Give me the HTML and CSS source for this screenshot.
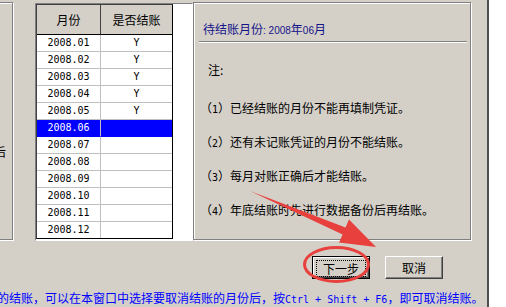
FILE: index.html
```html
<!DOCTYPE html>
<html lang="zh-CN">
<head>
  <meta charset="UTF-8" />
  <title>月末结账</title>
  <link rel="stylesheet" href="styles.css">
</head>
<body>

  <div class="dialog">
    <div class="main">
      <div class="side-panel"><span class="cut">后</span></div>

      <div class="listbox">
        <div class="grid">
          <div class="hcell sep">月份</div>
          <div class="hcell">是否结账</div>

          <div class="cell sep">2008.01</div><div class="cell">Y</div>
          <div class="cell sep">2008.02</div><div class="cell">Y</div>
          <div class="cell sep">2008.03</div><div class="cell">Y</div>
          <div class="cell sep">2008.04</div><div class="cell">Y</div>
          <div class="cell sep">2008.05</div><div class="cell">Y</div>
          <div class="cell sep selected">2008.06</div><div class="cell selected"></div>
          <div class="cell sep">2008.07</div><div class="cell"></div>
          <div class="cell sep">2008.08</div><div class="cell"></div>
          <div class="cell sep">2008.09</div><div class="cell"></div>
          <div class="cell sep">2008.10</div><div class="cell"></div>
          <div class="cell sep">2008.11</div><div class="cell"></div>
          <div class="cell sep last">2008.12</div><div class="cell last"></div>
        </div>
      </div>

      <div class="group">
        <div class="group-title">待结账月份<span class="num">: 2008</span>年<span class="num">06</span>月</div>
        <div class="rule"></div>
        <div class="note">注:</div>
        <ul class="rules">
          <li>（<span class="digit">1</span>）已经结账的月份不能再填制凭证。</li>
          <li>（<span class="digit">2</span>）还有未记账凭证的月份不能结账。</li>
          <li>（<span class="digit">3</span>）每月对账正确后才能结账。</li>
          <li>（<span class="digit">4</span>）年底结账时先进行数据备份后再结账。</li>
        </ul>
      </div>
    </div>

    <div class="buttons">
      <button class="btn default"><span class="focus">下一步</span></button>
      <button class="btn">取消</button>
    </div>

    <div class="hint">的结账，可以在本窗口中选择要取消结账的月份后，按<span class="mono">Ctrl + Shift + F6</span>，即可取消结账。</div>

    <svg class="marks" width="506" height="307" viewBox="0 0 506 307">
      <polygon fill="#e8403d" points="250,191 345.5,227.4 349,219.4 376,247 339,242.6 342.6,234.6"/>
      <ellipse cx="336.5" cy="264.5" rx="32" ry="17" fill="none" stroke="#e8403d" stroke-width="3"/>
    </svg>
  </div>

  <div class="outside"></div>

</body>
</html>
```

FILE: styles.css
```css
body {
  margin: 0;
  width: 506px;
  height: 307px;
  overflow: hidden;
  display: flex;
  background: #fff;
  font-family: "Noto Sans CJK SC", sans-serif;
  font-size: 12px;
  color: #000;
}

.dialog {
  position: relative;
  width: 487px;
  height: 307px;
  background: #d4d0c8;
  border-right: 2px solid #505050;
  overflow: hidden;
}

.outside {
  flex: 1;
  background: #fff;
}

.main {
  display: flex;
  align-items: flex-start;
  padding-top: 2px;
  height: 239px;
}

/* etched frames */
.side-panel,
.group {
  box-sizing: border-box;
  border: 1px solid #808080;
  box-shadow: 1px 1px 0 #fff, inset 1px 1px 0 #fff;
}

.side-panel {
  width: 15px;
  height: 238px;
  margin-left: -2px;
  padding-top: 141px;
  overflow: hidden;
}

.cut {
  display: block;
  margin-left: -5px;
  line-height: 16px;
  white-space: nowrap;
}

.listbox {
  box-sizing: border-box;
  width: 158px;
  height: 238px;
  margin-top: 1px;
  margin-left: 22px;
  background: #fff;
  border: 1px solid;
  border-color: #808080 #fff #fff #808080;
}

.grid {
  display: grid;
  grid-template-columns: 64px 71px;
  width: 135px;
  border: 1px solid #000;
  border-top-color: #404040;
  border-left-color: #404040;
}

.hcell {
  height: 29px;
  line-height: 29px;
  text-align: center;
  background: #d4d0c8;
  border-bottom: 1px solid #000;
}

.hcell.sep {
  border-right: 1px solid #404040;
}

.cell {
  height: 16px;
  line-height: 16px;
  text-align: center;
  border-bottom: 1px solid #c0c0c0;
  font-family: "DejaVu Sans Mono", "Liberation Mono", monospace;
  font-size: 10px;
}

.cell.sep {
  border-right: 1px solid #c0c0c0;
}

.cell.last {
  border-bottom: none;
}

.cell.selected {
  background: #0000ff;
  color: #fff;
  border-bottom-color: #0000ff;
}

.group {
  width: 278px;
  height: 238px;
}

.group-title {
  height: 16px;
  margin-top: 18px;
  padding-left: 9px;
  line-height: 16px;
  color: #14148a;
  white-space: nowrap;
}

.num {
  font-family: "Liberation Sans", sans-serif;
  font-size: 10px;
}

.rule {
  height: 1px;
  margin: 4px 3px 0 5px;
  background: #808080;
  border-bottom: 1px solid #fff;
}

.note {
  height: 16px;
  margin-top: 19px;
  padding-left: 14px;
  line-height: 16px;
}

.rules {
  list-style: none;
  margin: 22px 0 0;
  padding: 0 0 0 6px;
}

.rules li {
  height: 16px;
  line-height: 16px;
  margin-bottom: 18px;
  white-space: nowrap;
}

.digit {
  font-family: "DejaVu Sans Mono", monospace;
  font-size: 10px;
  line-height: 1;
}

.buttons {
  display: flex;
  gap: 15px;
  margin-top: 15px;
  padding-left: 312px;
}

.btn {
  box-sizing: border-box;
  width: 58px;
  height: 23px;
  padding: 0;
  font-family: "Noto Sans CJK SC", sans-serif;
  font-size: 12px;
  color: #000;
  background: #d4d0c8;
  border: 1px solid;
  border-color: #fff #404040 #404040 #fff;
  box-shadow: inset -1px -1px 0 #808080;
}

.btn.default {
  border: 1px solid #000;
  box-shadow: inset 1px 1px 0 #fff, inset -1px -1px 0 #404040, inset -2px -2px 0 #808080;
  padding: 3px;
}

.focus {
  display: block;
  height: 15px;
  line-height: 15px;
  border: 1px dotted #000;
}

.hint {
  margin-top: 11px;
  margin-left: -3px;
  line-height: 16px;
  color: #0000ff;
  white-space: nowrap;
}

.mono {
  font-family: "DejaVu Sans Mono", "Liberation Mono", monospace;
  font-size: 10px;
}

.marks {
  position: absolute;
  top: 0;
  left: 0;
  pointer-events: none;
}
```
